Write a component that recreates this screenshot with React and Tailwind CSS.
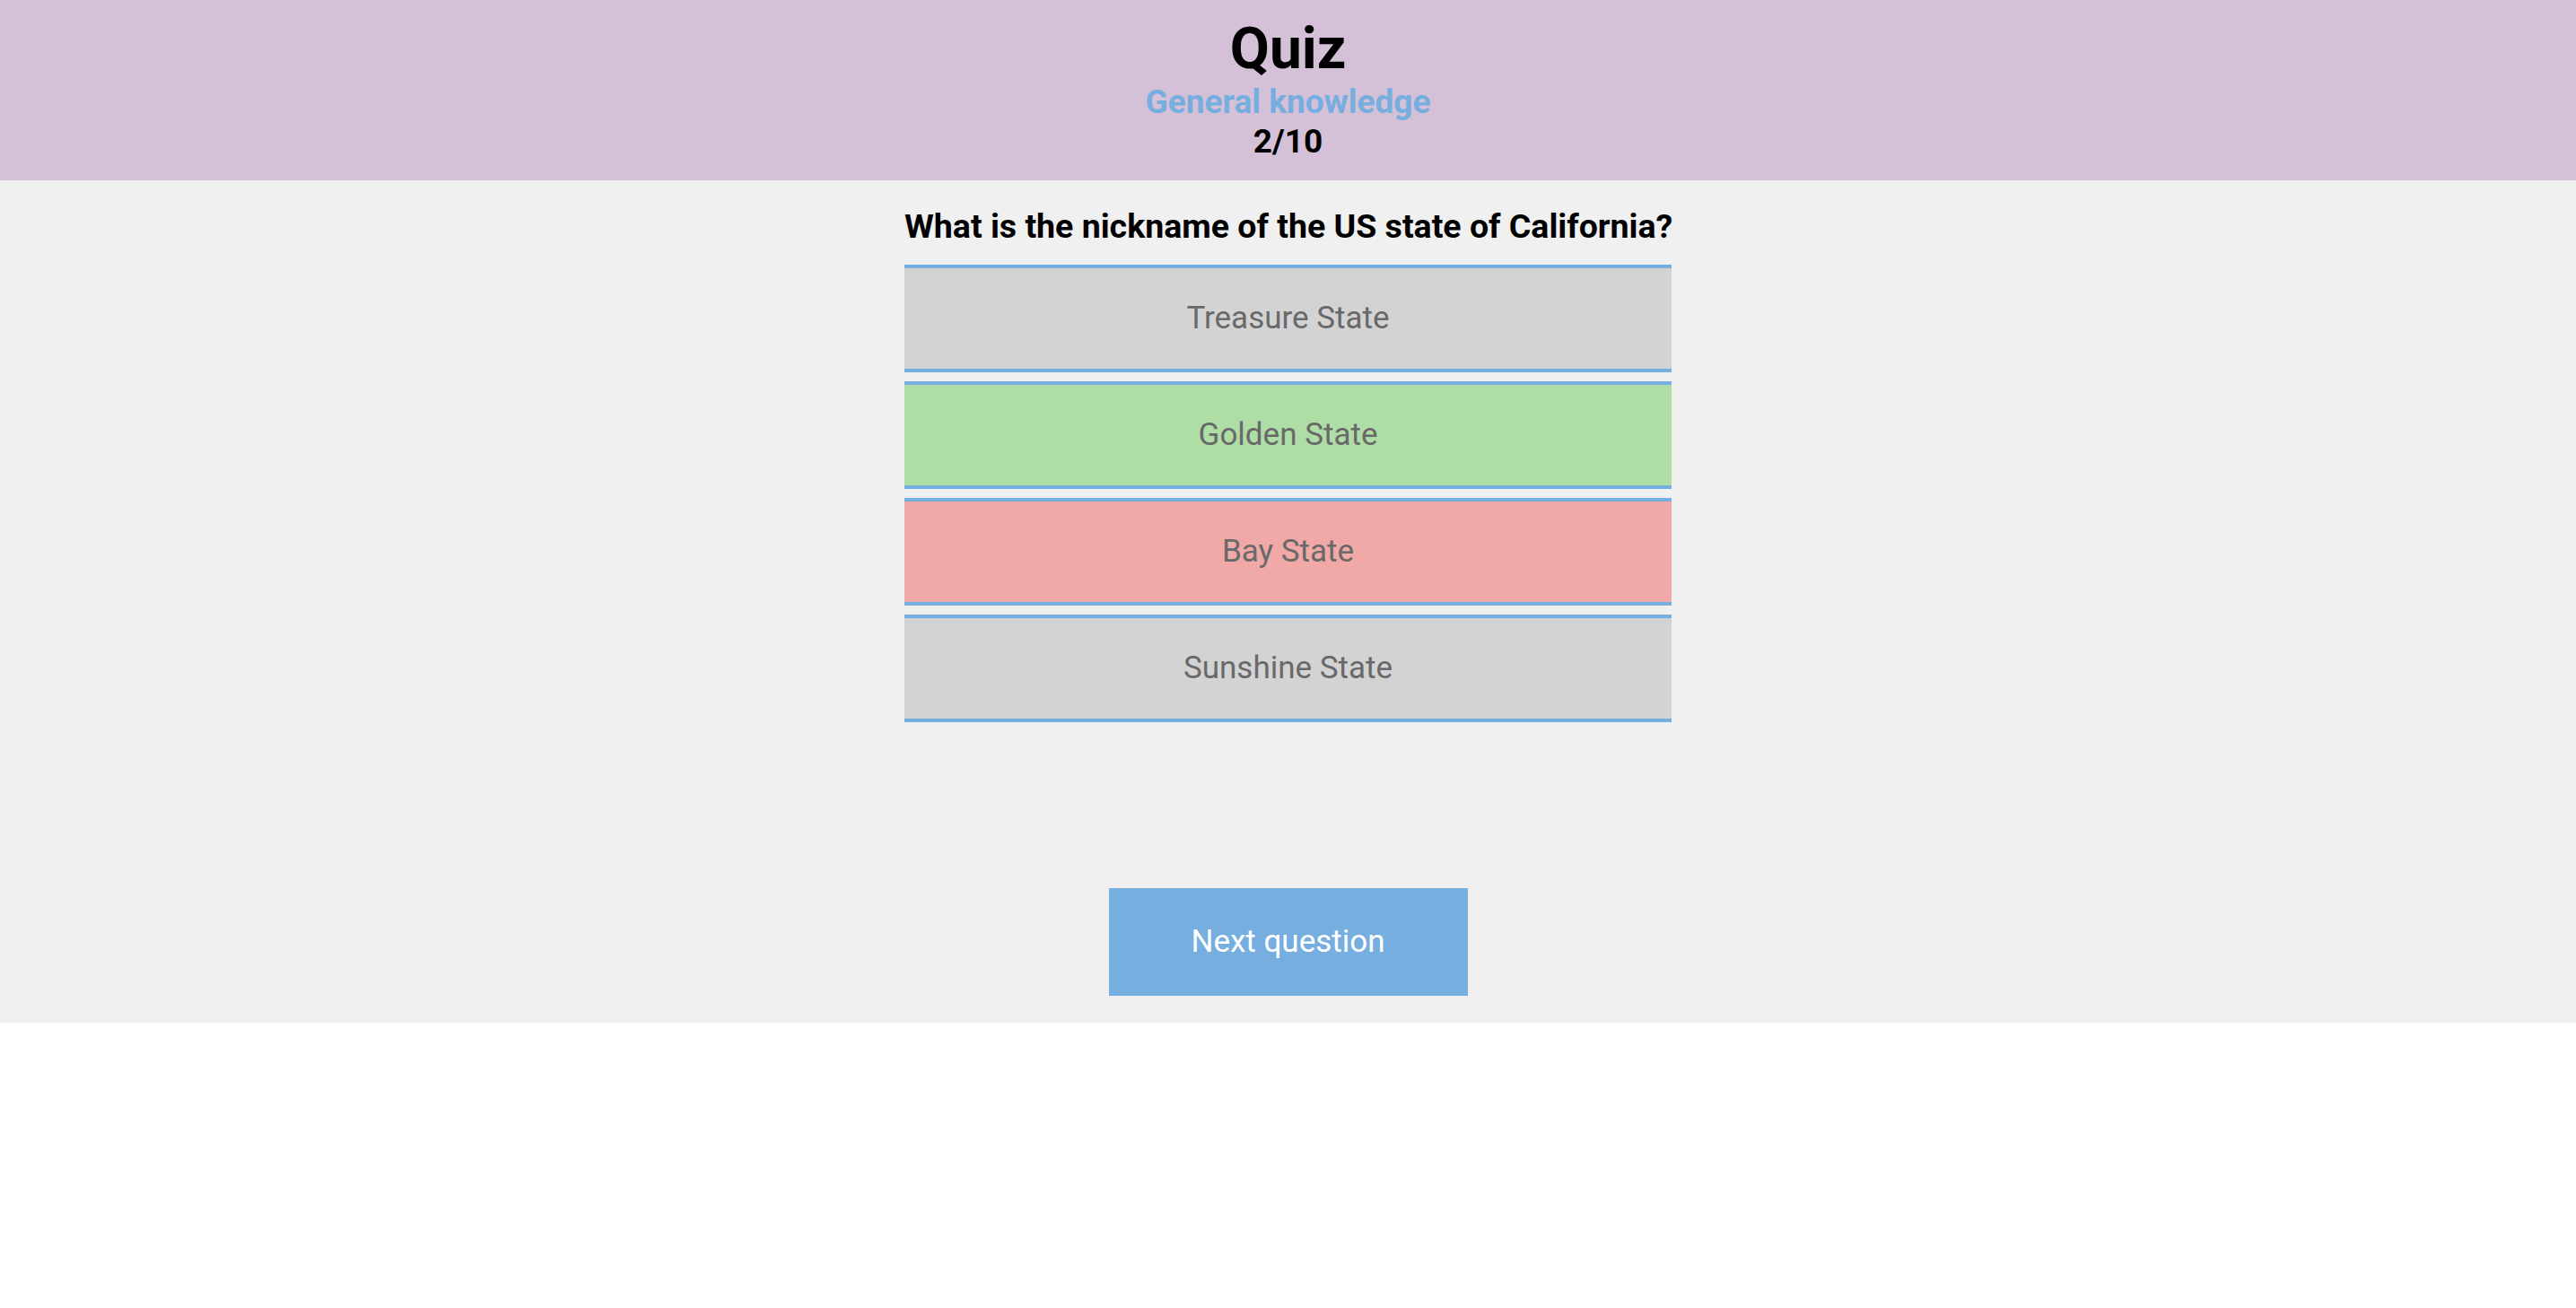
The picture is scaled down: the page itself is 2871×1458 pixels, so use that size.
import React from "react";

const answers = [
  { label: "Treasure State", tone: "bg-[#d3d3d3]" },
  { label: "Golden State", tone: "bg-[#aedda6]" },
  { label: "Bay State", tone: "bg-[#f1a9a7]" },
  { label: "Sunshine State", tone: "bg-[#d3d3d3]" },
];

const AnswerRow = ({ label, tone }) => (
  <div
    className={
      "h-[120px] border-y-4 border-[#75aee0] flex items-center justify-center text-[35px] text-[#696969] " +
      tone
    }
  >
    {label}
  </div>
);

export default function App() {
  return (
    <div className="font-['Roboto',sans-serif]">
      <header className="h-[201px] bg-[#d4c0d7] flex flex-col items-center pt-[23px] font-bold">
        <h1 className="text-[64px] leading-[64px] text-black">Quiz</h1>
        <div className="mt-[5px] text-[37px] leading-[44px] text-[#76aee0]">General knowledge</div>
        <div className="text-[37px] leading-[44px] text-black">2/10</div>
      </header>

      <main className="bg-[#f0f0f0] flex flex-col items-center pt-[28px] pb-[30px]">
        <div className="w-[855px] flex flex-col">
          <h2 className="text-[37.5px] leading-[46px] font-bold text-black text-center whitespace-nowrap">
            What is the nickname of the US state of California?
          </h2>
          <div className="mt-[20px] flex flex-col gap-[10px]">
            {answers.map((a) => (
              <AnswerRow key={a.label} {...a} />
            ))}
          </div>
        </div>

        <button
          type="button"
          className="mt-[185px] w-[400px] h-[120px] bg-[#76aedf] text-white text-[35px]"
        >
          Next question
        </button>
      </main>
    </div>
  );
}
